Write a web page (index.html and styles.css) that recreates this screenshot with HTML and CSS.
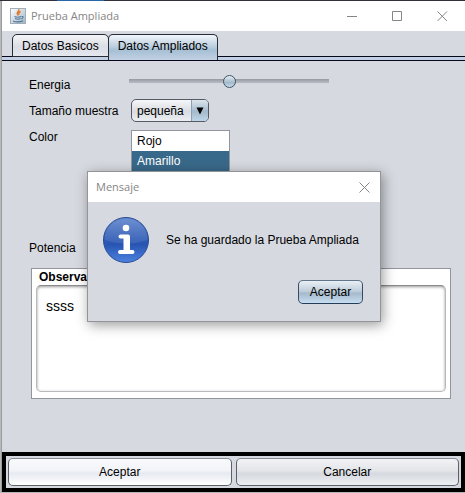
FILE: index.html
```html
<!DOCTYPE html>
<html lang="es">
<head>
<meta charset="utf-8">
<title>Prueba Ampliada</title>
<link rel="stylesheet" href="styles.css">
</head>
<body>
<main class="window">
  <header class="titlebar">
    <svg class="app-icon" width="16" height="16" viewBox="0 0 16 16" aria-hidden="true">
      <defs><linearGradient id="cup" x1="0" y1="0" x2="1" y2="1"><stop offset="0" stop-color="#fff"/><stop offset="1" stop-color="#9fb3c4"/></linearGradient></defs>
      <rect x=".5" y=".5" width="15" height="15" fill="url(#cup)" stroke="#a3aeb8"/>
      <path d="M8.7 1.2c1.4 2-2.6 3-1.4 4.700l1 1.600M10.700 3.500C8.500 4.500 8.300 5.300 9.300 6.500" fill="none" stroke="#e0762c" stroke-width="1.400"/>
      <path d="M4.500 8.500c1.500.8 4.500.8 6.500 0M5 10.500c1.500.8 4 .8 5.500 0M3 13c2.500 1.300 7.500 1.200 10-.3M11.500 8.500c2.200-.5 2 1.800-.2 2.500" fill="none" stroke="#4d789c" stroke-width="1.100"/>
    </svg>
    <h1 class="title">Prueba Ampliada</h1>
    <button class="caption" aria-label="Minimizar"><svg width="11" height="11" viewBox="0 0 11 11"><path d="M0 5.500h10"/></svg></button>
    <button class="caption" aria-label="Maximizar"><svg width="11" height="11" viewBox="0 0 11 11"><path d="M.5.5h9v9h-9z"/></svg></button>
    <button class="caption" aria-label="Cerrar"><svg width="11" height="11" viewBox="0 0 11 11"><path d="M.5.5l9.500 9.500M10 .5L.5 10"/></svg></button>
  </header>

  <nav class="tabs" role="tablist">
    <button class="tab" role="tab" aria-selected="false">Datos Basicos</button>
    <button class="tab tab-active" role="tab" aria-selected="true">Datos Ampliados</button>
  </nav>

  <section class="content">
    <div class="form">
      <label for="energia">Energia</label>
      <input class="slider" id="energia" type="range" min="0" max="100" value="50">
      <label for="muestra">Tamaño muestra</label>
      <div class="combo">
        <select id="muestra"><option>pequeña</option></select>
        <span class="combo-arrow"><svg width="8" height="8" viewBox="0 0 8 8" aria-hidden="true"><path d="M.5.5h7L4 7.500z"/></svg></span>
      </div>
      <label for="color">Color</label>
      <select class="list" id="color" size="5">
        <option>Rojo</option>
        <option class="picked">Amarillo</option>
      </select>
      <span>Potencia</span>
    </div>
    <div class="notes">
      <label class="notes-label" for="obs">Observaciones</label>
      <textarea class="notes-text" id="obs">ssss</textarea>
    </div>
  </section>

  <footer class="actions">
    <button class="button button-focus">Aceptar</button>
    <button class="button">Cancelar</button>
  </footer>

  <div class="dialog" role="dialog" aria-labelledby="dialog-title">
    <header class="dialog-bar">
      <h2 class="title" id="dialog-title">Mensaje</h2>
      <button class="dialog-close" aria-label="Cerrar"><svg width="11" height="11" viewBox="0 0 11 11"><path d="M.5.5l10 10M10.500.5l-10 10"/></svg></button>
    </header>
    <div class="message">
      <svg width="48" height="48" viewBox="0 0 48 48" aria-hidden="true">
        <defs>
          <linearGradient id="ball" x1="0" y1="0" x2="0" y2="1"><stop offset="0" stop-color="#6288cd"/><stop offset=".45" stop-color="#3560b8"/><stop offset=".6" stop-color="#2855b2"/><stop offset="1" stop-color="#4d82df"/></linearGradient>
        </defs>
        <circle cx="24" cy="24" r="22.500" fill="url(#ball)" stroke="#284b93"/>
        <path d="M2.500 24a21.500 21.500 0 0 1 43 0q-21 7-43 0z" fill="#fff" opacity=".08"/>
        <circle cx="24" cy="12" r="3.300" fill="#fff"/>
        <path d="M18.500 20.500H26v15M18 36h12.500" fill="none" stroke="#fff" stroke-width="4" stroke-linecap="round" stroke-linejoin="round"/>
        <path d="M21.500 20h6v15h-6z" fill="#fff"/>
      </svg>
      <p>Se ha guardado la Prueba Ampliada</p>
    </div>
    <div class="dialog-actions"><button class="button button-default">Aceptar</button></div>
  </div>
</main>
</body>
</html>
```
FILE: styles.css
```css
* {
  box-sizing: border-box;
}

body {
  margin: 0;
  padding: 1px 0 1px 1px;
  height: 100vh;
  display: flex;
  background: linear-gradient(90deg, #33303a 57px, #2867a5 57px, #2867a5 104px, #33303a 104px) top / 100% 1px no-repeat #b8b8ba;
  font: 12px/16px "Liberation Sans", Arial, sans-serif;
  color: #000;
  overflow: hidden;
}

button, select, textarea, input {
  font: inherit;
  color: inherit;
  margin: 0;
}

h1, h2, p {
  margin: 0;
}

.window {
  position: relative;
  flex: 1;
  min-width: 0;
  display: flex;
  flex-direction: column;
  border-left: 1px solid #9b9ca0;
  background: #d6d9df;
}

.titlebar {
  display: flex;
  align-items: center;
  height: 30px;
  padding-left: 8px;
  background: #fff;
}

.app-icon {
  margin-right: 5px;
}

.title {
  flex: 1;
  font: 11px/16px "Open Sans", "Noto Sans", sans-serif;
  color: #858585;
}

.caption, .dialog-close {
  display: grid;
  place-items: center;
  width: 45px;
  height: 30px;
  padding: 0;
  border: 0;
  background: none;
}

.caption svg, .dialog-close svg {
  fill: none;
  stroke: #858585;
}

.tabs {
  display: flex;
  height: 30px;
  padding: 3px 0 0 10px;
  border-bottom: 1px solid #06071b;
  background: linear-gradient(#06071b, #06071b) 0 25px / 100% 1px no-repeat, linear-gradient(#c3d0e3, #c3d0e3) 0 26px / 100% 4px no-repeat;
}

.tab {
  height: 23px;
  padding: 0 9px;
  border: 1px solid #282b38;
  border-radius: 5px 5px 0 0;
  background: linear-gradient(#f4f5f7, #dadde3 55%, #e4e7ed);
}

.tab-active {
  height: 26px;
  margin-left: -1px;
  padding-bottom: 3px;
  border-bottom: 0;
  background: linear-gradient(#f2f6fa, #b6cbdc 50%, #a5bfd4 60%, #c3d0e3);
}

.content {
  flex: 1;
  padding: 8px 14px 0 27px;
}

.form {
  display: grid;
  grid-template-columns: 102px 1fr;
  grid-template-rows: 26px 26px 111px 16px;
  padding-top: 8px;
}

.form > * {
  justify-self: start;
}

.slider {
  appearance: none;
  width: 200px;
  height: 16px;
  margin: -4px 0 0 -2px;
  background: linear-gradient(#9599a2, #b5b8c0 70%, #e3e5ea) center / 100% 5px no-repeat;
  border-radius: 4px;
}

.slider::-webkit-slider-thumb {
  appearance: none;
  width: 13px;
  height: 13px;
  border: 1px solid #3f5468;
  border-radius: 50%;
  background: linear-gradient(#e6edf4, #a4bacb 60%, #c5dbec);
}

.combo {
  display: flex;
  position: relative;
  width: 78px;
  height: 23px;
  margin-top: -4px;
}

.combo select {
  appearance: none;
  width: 100%;
  padding: 0 5px;
  border: 1px solid #555b66;
  border-radius: 5px;
  background: linear-gradient(#f5f6f8, #d9dce2 55%, #eceef2);
}

.combo-arrow {
  position: absolute;
  inset: 1px 1px 1px auto;
  width: 17px;
  display: grid;
  place-items: center;
  border-left: 1px solid #8ca0b5;
  border-radius: 0 4px 4px 0;
  background: linear-gradient(#dce5ee, #a3b9cc 55%, #bfd5e8);
  pointer-events: none;
}

.list {
  width: 99px;
  height: 100px;
  margin-top: 1px;
  padding: 0;
  border: 1px solid #92959d;
  border-radius: 0;
  background: #fff;
  overflow: hidden;
}

.list option {
  min-height: 20px;
  padding: 3px 5px 1px;
  line-height: 16px;
}

.list .picked {
  background: #39698a;
  color: #fff;
}

.notes {
  display: flex;
  flex-direction: column;
  height: 131px;
  margin: 12px 0 0 2px;
  padding: 0 4px 6px;
  border: 1px solid #92959d;
  background: #fff;
}

.notes-label {
  padding-left: 3px;
  font-weight: bold;
}

.notes-text {
  flex: 1;
  resize: none;
  padding: 12px 9px;
  border: 1px solid #b8b9bc;
  border-top-color: #8a8b8e;
  border-radius: 5px;
  outline: 0;
  box-shadow: inset 0 1px 3px #999;
  background: #fff;
  font-size: 14px;
}

.actions {
  display: flex;
  gap: 4px;
  height: 40px;
  padding: 2px;
  border: 4px solid #000;
}

.button {
  flex: 1;
  padding: 0;
  border: 1px solid #5c606b;
  border-top-color: #888c95;
  border-radius: 5px;
  background: linear-gradient(#f2f3f5, #e3e5e9 45%, #d6d9df 55%, #eceef2);
}

.button-focus {
  background: linear-gradient(#fafbfc, #f1f3f8 45%, #e7eaf1 55%, #fff);
}

.button-default {
  flex: none;
  width: 65px;
  height: 24px;
  border-color: #63758a #354c63 #263d57;
  background: linear-gradient(#e9eff5, #bdccd9 48%, #a5b9ca 55%, #c7def1);
}

.dialog {
  position: absolute;
  top: 170px;
  left: 85px;
  width: 294px;
  border: 1px solid #929498;
  background: #d6d9df;
  box-shadow: 2px 3px 12px rgba(0, 0, 0, .4);
}

.dialog-bar {
  display: flex;
  align-items: center;
  height: 30px;
  padding-left: 8px;
  background: #fff;
}

.dialog-close {
  width: 31px;
}

.message {
  display: flex;
  align-items: center;
  gap: 16px;
  padding: 14px 14px 0;
}

.dialog-actions {
  display: flex;
  justify-content: flex-end;
  padding: 16px 17px 17px;
}
```
